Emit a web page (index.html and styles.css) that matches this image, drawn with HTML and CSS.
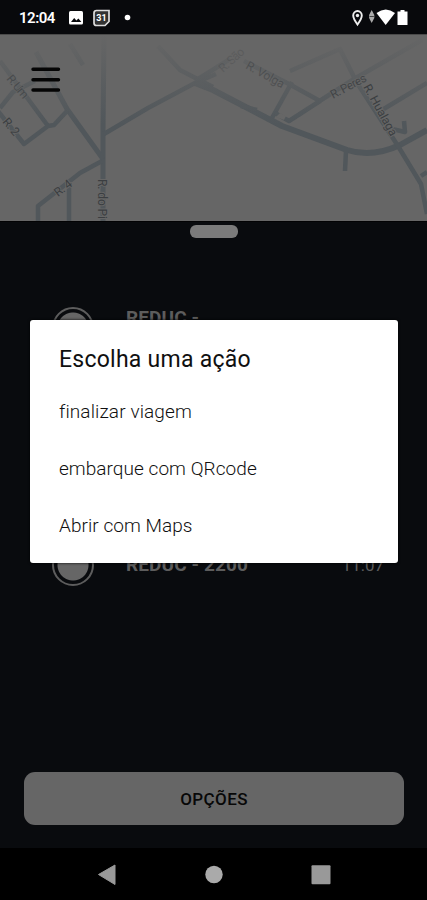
FILE: index.html
```html
<!DOCTYPE html>
<html lang="pt-BR">
<head>
<meta charset="utf-8">
<title>Viagem</title>
<link rel="stylesheet" href="styles.css">
</head>
<body>
<div class="screen">
  <header class="status">
    <span class="clock">12:04</span>
    <svg class="status-left" width="66" height="20" viewBox="0 0 66 20">
      <rect x="1" y="3" width="14" height="13.5" rx="1.5" fill="#fff"/>
      <path d="M3 14l3.2-4 2.2 2.6 2-2.2 3 3.6z" fill="#08090c"/>
      <path d="M28.500 2.500h12.500v11l-4 4h-8.500q-2.500 0-2.500-2.500v-10q0-2.500 2.500-2.500z" fill="#333" stroke="#ddd" stroke-width="1.700"/>
      <text x="33.500" y="13.300" class="day">31</text>
      <circle cx="59.500" cy="9.500" r="2.800" fill="#fff"/>
    </svg>
    <svg class="status-right" width="60" height="20" viewBox="0 0 60 20">
      <path d="M7.500 16.500C5 13 3.200 10.500 3.200 7.500a4.300 4.500 0 0 1 8.600 0c0 3-1.800 5.500-4.300 9z" fill="none" stroke="#eee" stroke-width="1.900"/>
      <circle cx="7.500" cy="7.500" r="1.700" fill="#eee"/>
      <path d="M21.700 2l2.600 5v3l-2.600 5-2.600-5V7z" fill="#aaa"/>
      <path d="M19.500 8.500h4.400" stroke="#444"/>
      <path d="M26.500 5q9.300-7 18.500 0L35.700 17z" fill="#fff"/>
      <path d="M50.500 2h4v1.500h3v13.500h-10V3.500h3z" fill="#fff"/>
    </svg>
  </header>

  <section class="map">
    <svg width="427" height="187" viewBox="0 0 427 187">
      <defs>
        <linearGradient id="fade" x1="0" y1="0" x2="0" y2="1">
          <stop offset="0" stop-color="#666"/>
          <stop offset=".25" stop-color="#666" stop-opacity=".75"/>
          <stop offset="1" stop-color="#666" stop-opacity="0"/>
        </linearGradient>
      </defs>
      <g fill="none" stroke="#51575b" stroke-width="4.500" stroke-linejoin="round">
        <path d="M104 0L103 95 103 187" stroke-width="5"/>
        <path d="M36 18L67 75 103 125" stroke-width="5"/>
        <path d="M102 127L80 139 38 172V187M69 147V187"/>
        <path d="M67 77L54 91 48 92 24 110-2 77M48 92L0 27M0 74L13 58 35 47M70 10L83 31"/>
        <path d="M104 100L148 74 195 49 216 40M158 12L180 36 213 53"/>
        <path d="M195 49L213 56 282 92 347 116Q372 124 400 111L427 96" stroke-width="6"/>
        <path d="M195 47L230 25M346 117L345 137M241 72L257 76"/>
        <path d="M272 84L292 48"/>
        <path d="M290 37L340 15 357 49 398 112 421 150 427 180"/>
        <path d="M244 27L289 50 320 67 289 87 275 79M318 68L354 45 422 6M382 76L427 49M392 95L405 98 404 87M421 142L427 138"/>
      </g>
      <path d="M276 83l4-4 6 3-2 4z" fill="#666"/>
      <rect width="427" height="90" fill="url(#fade)"/>
      <g fill="#3b3e41" stroke="#666" stroke-width="2" paint-order="stroke" class="street">
        <text transform="translate(6 45) rotate(50)" textLength="27" opacity=".6">R. Um</text>
        <text transform="translate(2 88) rotate(50)" textLength="19">R. 2</text>
        <text transform="translate(58 163) rotate(-38)" textLength="19">R. 4</text>
        <text transform="translate(97.500 145) rotate(90)" textLength="40">R. do Pi</text>
        <text transform="translate(223 39) rotate(-42)" textLength="30" opacity=".25">R. São</text>
        <text transform="translate(245 34) rotate(29)" textLength="42" opacity=".5">R. Volga</text>
        <text transform="translate(333 65) rotate(-28)" textLength="39" opacity=".8">R. Peres</text>
        <text transform="translate(363 53) rotate(61)" textLength="57">R. Hualaga</text>
      </g>
      <path d="M0 .5h427" stroke="#4a4a4a"/>
      <path d="M33 35.300h25.500M33 45.800h25.500M33 56h25.500" stroke="#050505" stroke-width="3.400" stroke-linecap="round"/>
    </svg>
  </section>

  <main class="sheet">
    <div class="handle"></div>
    <ol class="stops">
      <li class="stop"><i class="marker"></i><b class="place">REDUC -</b></li>
      <li class="stop"><i class="marker"></i><b class="place last">REDUC - 2200</b><time class="time">11:07</time></li>
    </ol>
    <button class="options">OPÇÕES</button>
  </main>

  <nav class="navbar">
    <svg width="20" height="22" viewBox="0 0 20 22"><path d="M1.500 10.500L18 1v19.500z" fill="#999" stroke="#999" stroke-linejoin="round"/></svg>
    <svg width="20" height="22" viewBox="0 0 20 22"><circle cx="10" cy="10.500" r="8.700" fill="#aaa"/></svg>
    <svg width="20" height="22" viewBox="0 0 20 22"><rect x=".5" y="1.200" width="19" height="19" rx="1" fill="#999"/></svg>
  </nav>

  <div class="dialog" role="dialog">
    <h1 class="title">Escolha uma ação</h1>
    <div class="action a1">finalizar viagem</div>
    <div class="action a2">embarque com QRcode</div>
    <div class="action a3">Abrir com Maps</div>
  </div>
</div>
</body>
</html>
```
FILE: styles.css
```css
* { box-sizing: border-box; }
body { margin: 0; background: #000; font-family: Roboto, "Liberation Sans", sans-serif; }
.screen { position: relative; width: 427px; height: 900px; display: flex; flex-direction: column; overflow: hidden; }
.status { height: 34px; background: #08090c; display: flex; align-items: center; padding: 2px 17px 0 19px; color: #fff; }
.clock { font-size: 15px; font-weight: 600; letter-spacing: -.5px; width: 49px; }
.status-right { margin-left: auto; }
.day { font: 700 9px Roboto, sans-serif; fill: #fff; text-anchor: middle; }
.map { height: 187px; background: #666; }
.map svg { display: block; }
.street { font-size: 12px; }
.sheet { height: 627px; background: #090b0e; border-top: 1px solid #030304; display: flex; flex-direction: column; align-items: center; padding: 3px 23px 23px 24px; }
.handle { width: 48px; height: 13px; border-radius: 6px; background: #7b7b7b; flex: none; }
.stops { list-style: none; margin: 69px 0 0; padding: 0 20px 0 28px; width: 100%; height: 280px; display: flex; flex-direction: column; justify-content: space-between; }
.stop { display: flex; height: 43px; color: #5d5d5d; }
.marker { width: 42px; height: 42px; border: 2.5px solid #5d5d5d; border-radius: 50%; background: radial-gradient(circle, #666 15px, transparent 16px); flex: none; }
.place { margin: 0 0 0 32px; font-size: 19px; line-height: 22px; letter-spacing: .1px; }
.last { margin-top: 10px; }
.time { margin: 11px 0 0 auto; font-size: 17px; line-height: 20px; }
.options { margin-top: auto; width: 380px; height: 53px; border: 0; border-radius: 11px; background: #666; color: #080808; font: 500 17px Roboto, sans-serif; letter-spacing: .4px; padding: 1px 0 0; }
.navbar { height: 52px; display: flex; justify-content: center; gap: 87px; padding-top: 16px; }
.dialog { position: absolute; left: 30px; top: 320px; width: 368px; height: 243px; border-radius: 3px; background: #fff; padding: 26px 29px 24px; color: #101010; box-shadow: 0 0 3px #000; white-space: nowrap; }
.title { margin: 0; font-size: 23px; font-weight: 400; line-height: 28px; letter-spacing: .25px; }
.action { font-size: 19px; line-height: 24px; font-weight: 300; margin-top: 33px; letter-spacing: .05px; }
.action.a1 { margin-top: 26px; letter-spacing: .12px; }
```
